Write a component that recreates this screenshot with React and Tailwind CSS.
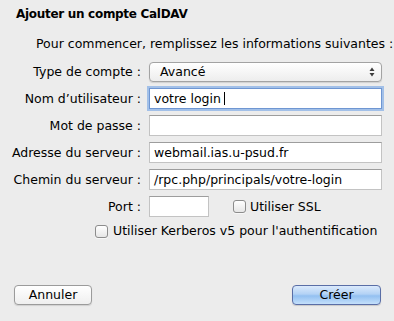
import React from 'react';

function Field({ label, value, focused, caret }) {
  return (
    <div className="flex items-center h-[21px]">
      <div className="w-[141px] text-right whitespace-nowrap">{label}</div>
      <div
        className={
          'ml-[8px] w-[233px] h-[21px] bg-white flex items-center pl-[4px] whitespace-nowrap overflow-hidden border ' +
          (focused
            ? 'border-[#6f96d2] shadow-[0_0_0_2px_#a2c0e8]'
            : 'border-[#c3c3c3] border-t-[#9d9d9d]')
        }
      >
        {value}
        {caret && <span className="ml-[3px] inline-block w-px h-[13px] bg-black" />}
      </div>
    </div>
  );
}

function Checkbox() {
  return (
    <span className="inline-block w-[13px] h-[13px] rounded-[3px] border border-[#8c8c8c] bg-gradient-to-b from-white to-[#e6e6e6] shadow-[0_1px_0_rgba(255,255,255,0.6)]" />
  );
}

export default function App() {
  return (
    <div className="w-[394px] h-[321px] bg-[#ececec] flex flex-col font-['DejaVu_Sans',sans-serif] text-[12.5px] leading-[16px] text-black overflow-hidden">
      <div className="pt-[6px] pl-[16px] font-bold text-[12px] tracking-[-0.3px]">Ajouter un compte CalDAV</div>
      <div className="mt-[14px] pl-[36px] whitespace-nowrap">
        Pour commencer, remplissez les informations suivantes :
      </div>

      <div className="mt-[10px] flex flex-col gap-[6px]">
        <div className="flex items-center h-[20px]">
          <div className="w-[141px] text-right whitespace-nowrap">Type de compte :</div>
          <div className="ml-[8px] w-[233px] h-[20px] rounded-[4px] border border-[#a3a3a3] bg-gradient-to-b from-white to-[#ededed] shadow-[0_1px_1px_rgba(0,0,0,0.12)] flex items-center pl-[10px] pr-[6px]">
            <span className="flex-1">Avancé</span>
            <svg width="6" height="10" viewBox="0 0 6 10">
              <path d="M3 0.5 L5.5 4 L0.5 4 Z" fill="#3c3c3c" />
              <path d="M3 9.5 L5.5 6 L0.5 6 Z" fill="#3c3c3c" />
            </svg>
          </div>
        </div>
        <Field label="Nom d’utilisateur :" value="votre login" focused caret />
        <Field label="Mot de passe :" value="" />
        <Field label="Adresse du serveur :" value="webmail.ias.u-psud.fr" />
        <Field label="Chemin du serveur :" value="/rpc.php/principals/votre-login" />
        <div className="flex items-center h-[21px]">
          <div className="w-[141px] text-right whitespace-nowrap">Port :</div>
          <div className="ml-[8px] w-[60px] h-[21px] bg-white border border-[#c3c3c3] border-t-[#9d9d9d]" />
          <div className="ml-[24px] flex items-center">
            <Checkbox />
            <span className="ml-[4px]">Utiliser SSL</span>
          </div>
        </div>
      </div>

      <div className="mt-[6px] pl-[95px] h-[16px] flex items-center whitespace-nowrap">
        <Checkbox />
        <span className="ml-[5px]">Utiliser Kerberos v5 pour l'authentification</span>
      </div>

      <div className="mt-auto pb-[16px] pl-[14px] pr-[13px] flex justify-between">
        <button className="w-[78px] h-[20px] rounded-[4px] border border-[#9b9b9b] bg-gradient-to-b from-white to-[#efefef] shadow-[0_1px_1px_rgba(0,0,0,0.12)] leading-[18px]">
          Annuler
        </button>
        <button className="w-[89px] h-[20px] rounded-[4px] border border-[#5a6ea6] bg-[linear-gradient(to_bottom,#dbeafc_0%,#b3d2f5_45%,#93c0f1_55%,#c4e0fb_100%)] shadow-[0_1px_1px_rgba(0,0,0,0.15)] leading-[18px]">
          Créer
        </button>
      </div>
    </div>
  );
}
